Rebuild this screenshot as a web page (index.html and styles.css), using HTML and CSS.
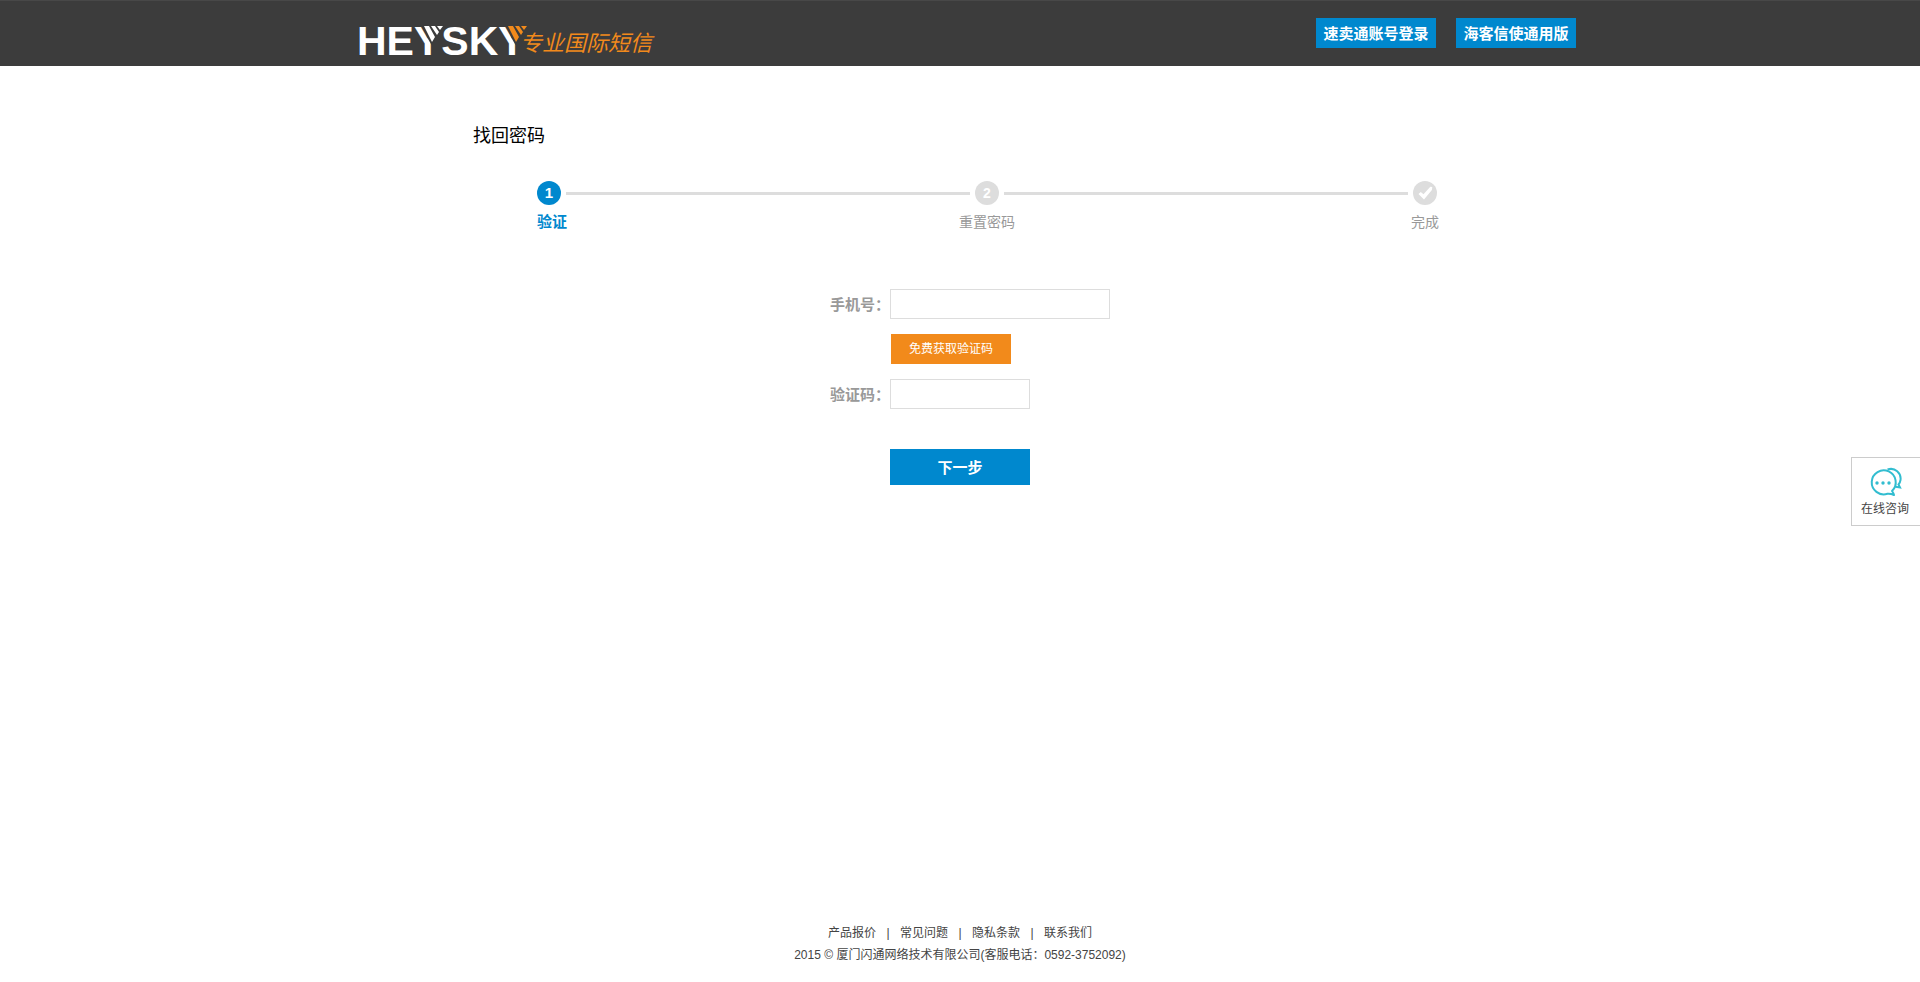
FILE: index.html
```html
<!DOCTYPE html>
<html lang="zh-CN">
<head>
<meta charset="utf-8">
<title>找回密码</title>
<link rel="stylesheet" href="styles.css">
</head>
<body>
<header class="header">
  <div class="header-inner">
    <a class="logo" href="#" aria-label="HEYSKY 专业国际短信">
      <svg class="logo-mark" width="172" height="36" viewBox="-4 -2 172 36">
        <text class="logo-word" x="-3" y="31">HEYSKY</text>
        <path class="logo-cut" d="M62 0h22v3L71.500 21 67.500 14zM146 0h22v3L155.500 21 151.500 14z"/>
        <path class="logo-stripe" d="M64 2h5l6 11-3 5zM71 2h4l4 6-2 3zM77 2h6l-3 4z"/>
        <path class="logo-stripe-orange" d="M148 2h5l6 11-3 5zM155 2h4l4 6-2 3zM161 2h6l-3 4z"/>
      </svg>
      <span class="logo-tagline">专业国际短信</span>
    </a>
    <nav class="header-nav">
      <a class="header-link" href="#">速卖通账号登录</a>
      <a class="header-link" href="#">海客信使通用版</a>
    </nav>
  </div>
</header>

<main class="main">
  <h1 class="title">找回密码</h1>
  <ol class="steps">
    <li class="step step-active"><span class="dot">1</span><span class="step-label">验证</span></li>
    <li class="bar"></li>
    <li class="step"><span class="dot">2</span><span class="step-label">重置密码</span></li>
    <li class="bar"></li>
    <li class="step"><span class="dot"><svg width="24" height="24" viewBox="0 0 24 24"><path d="M5.500 13l2.300-2 2.700 2.300 6.800-7.600 2 .3-.4 3L11 18.500z" fill="#fff"/></svg></span><span class="step-label">完成</span></li>
  </ol>
  <form class="form">
    <label class="form-label" for="phone">手机号：</label>
    <input class="field" id="phone" type="tel">
    <button class="code-button" type="button">免费获取验证码</button>
    <label class="form-label" for="code">验证码：</label>
    <input class="field field-short" id="code" type="text">
    <button class="next-button" type="submit">下一步</button>
  </form>
</main>

<a class="consult" href="#">
  <svg width="34" height="30" viewBox="0 0 34 30" fill="none" stroke="#32bdd0" stroke-width="2">
    <path d="M24 24A12 12 0 1 0 19.500 26.700Q23 26.500 26 28 25.500 26 24 24z" stroke-linejoin="round"/>
    <path d="M19.500 2.500C27 0 33.500 6 32.500 13c-.3 2-1 3.500-2 4.500l1.500 3-4.500-.7"/>
    <g fill="#32bdd0" stroke="none"><circle cx="9" cy="16" r="1.700"/><circle cx="15" cy="16" r="1.700"/><circle cx="21" cy="16" r="1.700"/></g>
  </svg>
  <span>在线咨询</span>
</a>

<footer class="footer">
  <nav class="footer-nav">
    <a href="#">产品报价</a><span>|</span><a href="#">常见问题</a><span>|</span><a href="#">隐私条款</a><span>|</span><a href="#">联系我们</a>
  </nav>
  <p class="copyright">2015 © 厦门闪通网络技术有限公司(客服电话：0592-3752092)</p>
</footer>
</body>
</html>
```

FILE: styles.css
```css
* {
  box-sizing: border-box;
}

body {
  margin: 0;
  min-height: 100vh;
  display: flex;
  flex-direction: column;
  background: #fff;
  color: #444;
  font: 12px/20px "Liberation Sans", "Noto Sans CJK SC", sans-serif;
}

a {
  color: inherit;
  text-decoration: none;
}

button,
input {
  font: inherit;
}

.header {
  background: #3c3c3c;
  border-top: 1px solid #484848;
}

.header-inner {
  display: flex;
  justify-content: space-between;
  align-items: flex-start;
  max-width: 1232px;
  margin: 0 auto;
  padding: 17px 0 18px 16px;
}

.logo {
  display: flex;
  align-items: flex-end;
  height: 30px;
  margin: 7px 0 -7px -4px;
}

.logo-mark {
  display: block;
  overflow: visible;
  margin-bottom: -3px;
  margin-right: -8px;
}

.logo-word {
  font: bold 41px "Liberation Sans", sans-serif;
  fill: #fff;
}

.logo-cut {
  fill: #3c3c3c;
}

.logo-stripe {
  fill: #fff;
}

.logo-stripe-orange {
  fill: #f28a1b;
}

.logo-tagline {
  color: #f28a1b;
  font-size: 22px;
  line-height: 22px;
  font-style: italic;
}

.header-nav {
  display: flex;
  gap: 20px;
}

.header-link {
  width: 120px;
  height: 30px;
  background: #0088ce;
  color: #fff;
  font-size: 15px;
  font-weight: bold;
  line-height: 32px;
  text-align: center;
}

.main {
  width: 100%;
  max-width: 1000px;
  margin: 0 auto;
  padding: 57px 13px 0;
  flex: 1;
}

.title {
  margin: 0;
  color: #000;
  font-size: 18px;
  font-weight: normal;
  line-height: 26px;
}

.steps {
  display: flex;
  gap: 5px;
  margin: 32px 10px 0 64px;
  padding: 0;
  list-style: none;
}

.step {
  display: flex;
  flex-direction: column;
  align-items: center;
  gap: 7px;
  width: 24px;
  color: #999;
  font-size: 14px;
  white-space: nowrap;
}

.dot {
  width: 24px;
  height: 24px;
  border-radius: 50%;
  background: #ddd;
  color: #fff;
  font-weight: bold;
  line-height: 24px;
  text-align: center;
}

.step-active {
  align-items: flex-start;
  color: #0088ce;
  font-size: 15px;
  font-weight: bold;
}

.step-active .dot {
  background: #0088ce;
}

.bar {
  flex: 1;
  height: 3px;
  margin-top: 11px;
  background: #ddd;
}

.form {
  display: grid;
  grid-template-columns: 60px 1fr;
  row-gap: 15px;
  margin: 57px 0 0 357px;
  font-size: 15px;
}

.form-label {
  height: 30px;
  color: #999;
  font-weight: bold;
  line-height: 32px;
  white-space: nowrap;
}

.field {
  width: 220px;
  height: 30px;
  padding: 0 8px;
  border: 1px solid #ddd;
  background: #fff;
}

.field-short {
  width: 140px;
}

.code-button {
  grid-column: 2;
  width: 120px;
  height: 30px;
  margin-left: 1px;
  padding: 0;
  border: 0;
  background: #f28a1b;
  color: #fff;
  font-size: 12px;
}

.next-button {
  grid-column: 2;
  width: 140px;
  height: 36px;
  margin-top: 25px;
  padding: 2px 0 0;
  border: 0;
  background: #0088ce;
  color: #fff;
  font-weight: bold;
}

.consult {
  position: fixed;
  top: 457px;
  right: 0;
  display: flex;
  flex-direction: column;
  align-items: center;
  gap: 2px;
  width: 69px;
  padding: 9px 2px 6px 0;
  border: 1px solid #ccc;
  border-right: 0;
  background: #fff;
}

.footer {
  padding-bottom: 17px;
  text-align: center;
}

.footer-nav {
  display: flex;
  justify-content: center;
}

.footer-nav span {
  width: 24px;
}

.copyright {
  margin: 2px 0 0;
}
```
